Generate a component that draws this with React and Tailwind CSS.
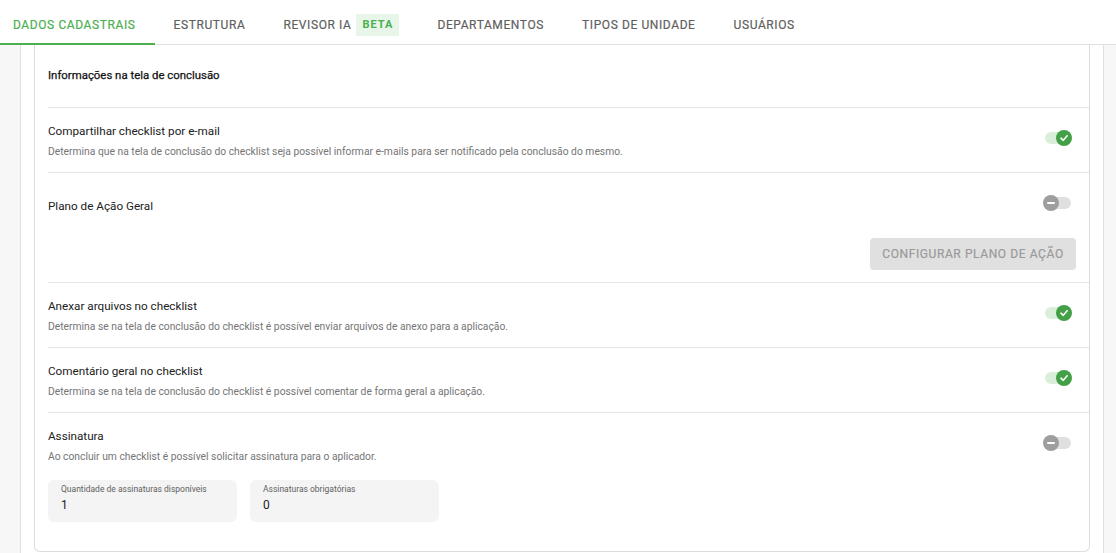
import React from "react";

const tabs = [
  { label: "Dados Cadastrais", active: true },
  { label: "Estrutura" },
  { label: "Revisor IA", badge: "Beta" },
  { label: "Departamentos" },
  { label: "Tipos de Unidade" },
  { label: "Usuários" },
];

function Toggle({ on }) {
  return (
    <div className="relative w-[30px] h-[16px] shrink-0">
      <div
        className={`absolute left-[2px] right-[2px] top-[2px] h-[12px] rounded-full ${
          on ? "bg-[#d9efda]" : "bg-[#e0e0e0]"
        }`}
      />
      {on ? (
        <div className="absolute top-0 left-[13px] w-[16px] h-[16px] rounded-full bg-[#43a047] flex items-center justify-center">
          <svg width="10" height="10" viewBox="0 0 10 10" fill="none">
            <path
              d="M2 5.2 L4.2 7.3 L8.2 2.8"
              stroke="white"
              strokeWidth="1.6"
              strokeLinecap="round"
              strokeLinejoin="round"
            />
          </svg>
        </div>
      ) : (
        <div className="absolute top-0 left-0 w-[16px] h-[16px] rounded-full bg-[#9e9e9e] flex items-center justify-center">
          <div className="w-[8px] h-[2px] bg-white rounded-sm" />
        </div>
      )}
    </div>
  );
}

function SettingRow({ title, description, on }) {
  return (
    <div className="ml-[13px] pr-[16px] pb-[13px] border-b border-[#e6e6e6]">
      <div className="flex items-start justify-between">
        <div className="pt-[15px]">
          <div className="text-[11.7px] leading-[16px] text-[#212121]">{title}</div>
          <div className="mt-[6px] text-[10.3px] leading-[14px] text-[#757575]">
            {description}
          </div>
        </div>
        <div className="mt-[22px]">
          <Toggle on={on} />
        </div>
      </div>
    </div>
  );
}

function NumberField({ label, value }) {
  return (
    <div className="w-[189px] h-[42px] rounded-[6px] bg-[#f4f4f4] px-[13px] pt-[4px]">
      <div className="text-[8.5px] leading-[10px] text-[#616161]">{label}</div>
      <div className="mt-[4px] text-[12px] leading-[14px] text-[#212121]">{value}</div>
    </div>
  );
}

export default function App() {
  return (
    <div className="h-[553px] overflow-hidden bg-white font-['Roboto',sans-serif]">
      {/* Tabs */}
      <nav className="flex h-[45px] border-b border-[#e0e0e0]">
        {tabs.map((tab, i) => (
          <div
            key={tab.label}
            className={`relative flex items-center h-[44px] pt-[6px] ${
              i === 0 ? "pl-[13px] pr-[19px]" : "px-[19px]"
            }`}
          >
            <span
              className={`text-[12px] uppercase tracking-[0.6px] ${
                tab.active
                  ? "text-[#4caf50] [-webkit-text-stroke:0.2px_#4caf50]"
                  : "text-[#5f5f5f] [-webkit-text-stroke:0.2px_#5f5f5f]"
              }`}
            >
              {tab.label}
            </span>
            {tab.badge && (
              <span className="ml-[5px] h-[22px] px-[6px] flex items-center bg-[#e8f5e9] text-[#4caf50] text-[11px] font-bold uppercase tracking-[1px]">
                {tab.badge}
              </span>
            )}
            {tab.active && (
              <div className="absolute left-0 right-0 bottom-[-1px] h-[2px] bg-[#4caf50]" />
            )}
          </div>
        ))}
      </nav>

      <div className="flex h-[508px] bg-[#f7f7f7]">
        <div className="ml-[20px] mr-[12px] flex-1 bg-white border-x border-[#e0e0e0] px-[13px]">
          <div className="h-[507px] border border-t-0 border-[#dcdcdc] rounded-b-[6px]">
            {/* Section header */}
            <div className="ml-[13px] h-[63px] pt-[22px] border-b border-[#e6e6e6]">
              <div className="text-[11.4px] leading-[16px] text-[#111111] [-webkit-text-stroke:0.25px_#111111]">
                Informações na tela de conclusão
              </div>
            </div>

            <SettingRow
              title="Compartilhar checklist por e-mail"
              description="Determina que na tela de conclusão do checklist seja possível informar e-mails para ser notificado pela conclusão do mesmo."
              on
            />

            {/* Plano de ação */}
            <div className="ml-[13px] pr-[13px] pb-[12px] border-b border-[#e6e6e6]">
              <div className="flex items-start justify-between pr-[3px]">
                <div className="pt-[25px] text-[11.7px] leading-[16px] text-[#212121]">
                  Plano de Ação Geral
                </div>
                <div className="mt-[22px]">
                  <Toggle on={false} />
                </div>
              </div>
              <div className="flex justify-end mt-[24px]">
                <button className="h-[32px] w-[206px] rounded-[4px] bg-[#e0e0e0] text-[#9a9a9a] text-[12px] tracking-[0.6px] uppercase [-webkit-text-stroke:0.2px_#9a9a9a]">
                  Configurar plano de ação
                </button>
              </div>
            </div>

            <SettingRow
              title="Anexar arquivos no checklist"
              description="Determina se na tela de conclusão do checklist é possível enviar arquivos de anexo para a aplicação."
              on
            />
            <SettingRow
              title="Comentário geral no checklist"
              description="Determina se na tela de conclusão do checklist é possível comentar de forma geral a aplicação."
              on
            />

            <div className="ml-[13px] pr-[16px]">
              <div className="flex items-start justify-between">
                <div className="pt-[15px]">
                  <div className="text-[11.7px] leading-[16px] text-[#212121]">Assinatura</div>
                  <div className="mt-[6px] text-[10.3px] leading-[14px] text-[#757575]">
                    Ao concluir um checklist é possível solicitar assinatura para o aplicador.
                  </div>
                </div>
                <div className="mt-[22px]">
                  <Toggle on={false} />
                </div>
              </div>
              <div className="flex gap-[13px] mt-[16px]">
                <NumberField label="Quantidade de assinaturas disponíveis" value="1" />
                <NumberField label="Assinaturas obrigatórias" value="0" />
              </div>
            </div>
          </div>
        </div>
      </div>
    </div>
  );
}
